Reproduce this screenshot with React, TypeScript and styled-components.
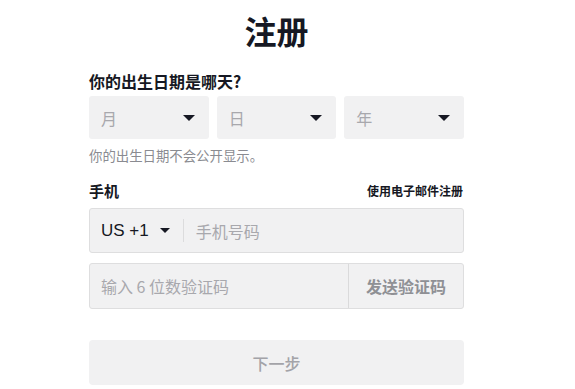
import React from "react";
import styled, { createGlobalStyle } from "styled-components";

const GlobalStyle = createGlobalStyle`
  html, body {
    margin: 0;
    padding: 0;
    background: #fff;
    font-family: "Noto Sans CJK SC", "Noto Sans", "Liberation Sans", sans-serif;
  }
`;

const Page = styled.div`
  width: 375px;
  padding-left: 89px;
  padding-top: 10px;
`;

const Title = styled.h1`
  margin: 0;
  font-size: 32px;
  line-height: 40px;
  font-weight: 700;
  text-align: center;
  color: #161823;
`;

const Label = styled.div`
  margin-top: 21px;
  font-size: 16px;
  line-height: 20px;
  font-weight: 700;
  color: #161823;
`;

const DateRow = styled.div`
  margin-top: 5px;
  display: grid;
  grid-template-columns: repeat(3, 1fr);
  gap: 8px;
`;

const Select = styled.div`
  height: 43px;
  box-sizing: border-box;
  background: #f1f1f2;
  border-radius: 3px;
  display: flex;
  align-items: center;
  justify-content: space-between;
  padding: 0 14px 0 12px;
  font-size: 16px;
  color: #a8a8ad;
`;

const Caret = styled.span<{ $size: number }>`
  width: 0;
  height: 0;
  border-left: ${(p) => p.$size}px solid transparent;
  border-right: ${(p) => p.$size}px solid transparent;
  border-top: ${(p) => p.$size}px solid #161823;
`;

const Hint = styled.div`
  margin-top: 7px;
  font-size: 13.4px;
  line-height: 18px;
  color: #8a8b91;
`;

const PhoneHeader = styled.div`
  margin-top: 16px;
  display: flex;
  justify-content: space-between;
  align-items: center;
  height: 20px;
`;

const SmallLabel = styled.span`
  font-size: 15px;
  font-weight: 700;
  color: #161823;
`;

const Link = styled.span`
  font-size: 12px;
  font-weight: 600;
  color: #161823;
  margin-right: 1px;
`;

const Field = styled.div<{ $top: number; $h: number }>`
  margin-top: ${(p) => p.$top}px;
  height: ${(p) => p.$h}px;
  box-sizing: border-box;
  background: #f1f1f2;
  border: 1px solid #dededf;
  border-radius: 3px;
  display: flex;
  align-items: center;
`;

const Country = styled.div`
  display: flex;
  align-items: center;
  gap: 11px;
  padding: 0 13px 0 11px;
  font-family: "Liberation Sans", Arial, sans-serif;
  font-size: 17px;
  color: #161823;
  height: 23px;
  border-right: 1px solid #dcdcdd;
`;

const Placeholder = styled.span<{ $pad: number }>`
  flex: 1;
  padding-left: ${(p) => p.$pad}px;
  font-size: 16px;
  color: #a8a8ad;
`;

const SendButton = styled.div`
  width: 114px;
  align-self: stretch;
  border-left: 1px solid #dadadb;
  display: flex;
  align-items: center;
  justify-content: center;
  font-size: 16px;
  font-weight: 700;
  color: #8f9095;
`;

const NextButton = styled.div`
  margin-top: 31px;
  height: 45px;
  background: #f1f1f2;
  border-radius: 4px;
  display: flex;
  align-items: center;
  justify-content: center;
  font-size: 16px;
  font-weight: 500;
  color: #a3a3a8;
`;

export default function App() {
  return (
    <>
      <GlobalStyle />
      <Page>
        <Title>注册</Title>
        <Label>你的出生日期是哪天?</Label>
        <DateRow>
          {["月", "日", "年"].map((t) => (
            <Select key={t}>
              <span>{t}</span>
              <Caret $size={6} />
            </Select>
          ))}
        </DateRow>
        <Hint>你的出生日期不会公开显示。</Hint>
        <PhoneHeader>
          <SmallLabel>手机</SmallLabel>
          <Link>使用电子邮件注册</Link>
        </PhoneHeader>
        <Field $top={8} $h={45}>
          <Country>
            <span>US +1</span>
            <Caret $size={5} />
          </Country>
          <Placeholder $pad={12}>手机号码</Placeholder>
        </Field>
        <Field $top={10} $h={46}>
          <Placeholder $pad={11}>输入 6 位数验证码</Placeholder>
          <SendButton>发送验证码</SendButton>
        </Field>
        <NextButton>下一步</NextButton>
      </Page>
    </>
  );
}
